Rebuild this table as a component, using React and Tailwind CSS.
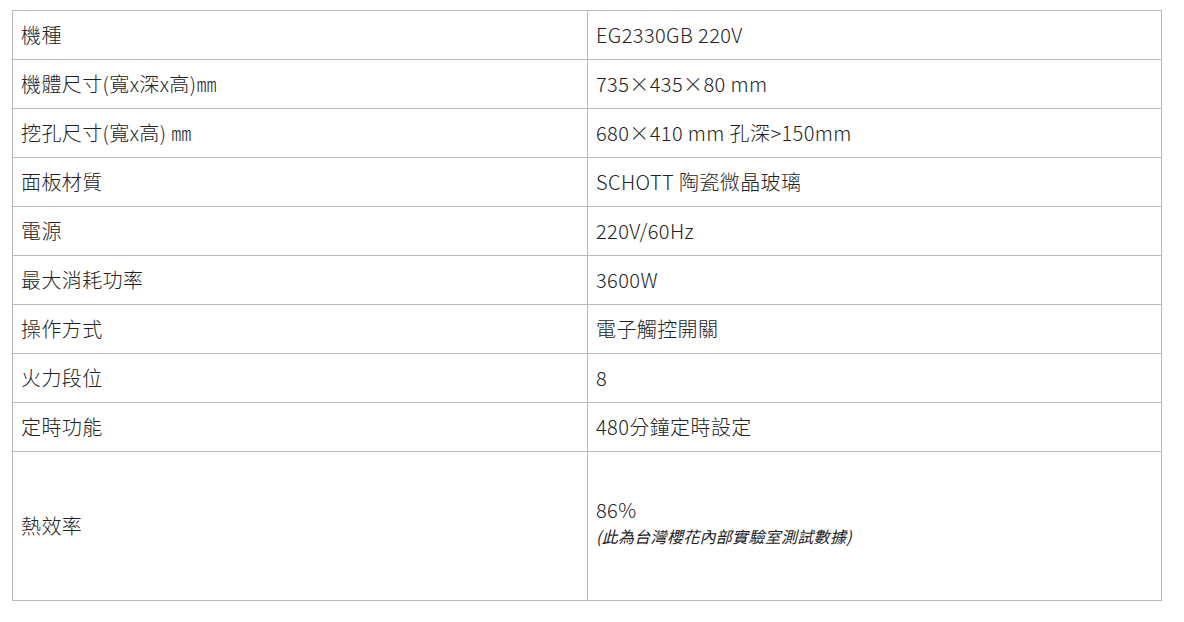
import React from 'react';

const rows = [
  ['機種', 'EG2330GB 220V'],
  ['機體尺寸(寬x深x高)㎜', '735×435×80 mm'],
  ['挖孔尺寸(寬x高) ㎜', '680×410 mm 孔深>150mm'],
  ['面板材質', 'SCHOTT 陶瓷微晶玻璃'],
  ['電源', '220V/60Hz'],
  ['最大消耗功率', '3600W'],
  ['操作方式', '電子觸控開關'],
  ['火力段位', '8'],
  ['定時功能', '480分鐘定時設定'],
];

const App = () => {
  return (
    <div className="bg-white min-h-[622px] pt-[10px] pl-[12px] font-['Noto_Sans_CJK_TC','Noto_Sans',sans-serif] text-[#222]">
      <table className="w-[1150px] border-collapse table-fixed text-[20px] font-light tracking-[0.4px]">
        <tbody>
          {rows.map(([label, value]) => (
            <tr key={label} className="h-[49px]">
              <td className="w-[575px] border border-[#bbb] px-[8px] align-middle leading-[28px]">{label}</td>
              <td className="border border-[#bbb] px-[8px] align-middle leading-[28px]">{value}</td>
            </tr>
          ))}
          <tr className="h-[149px]">
            <td className="border border-[#bbb] px-[8px] align-middle leading-[28px]">熱效率</td>
            <td className="border border-[#bbb] px-[8px] align-middle">
              <div className="leading-[28px] mt-[-10px]">86%</div>
              <div className="text-[16px] italic font-normal leading-[22px] mt-[1px] tracking-[0.3px]">(此為台灣櫻花內部實驗室測試數據)</div>
            </td>
          </tr>
        </tbody>
      </table>
    </div>
  );
};

export default App;
